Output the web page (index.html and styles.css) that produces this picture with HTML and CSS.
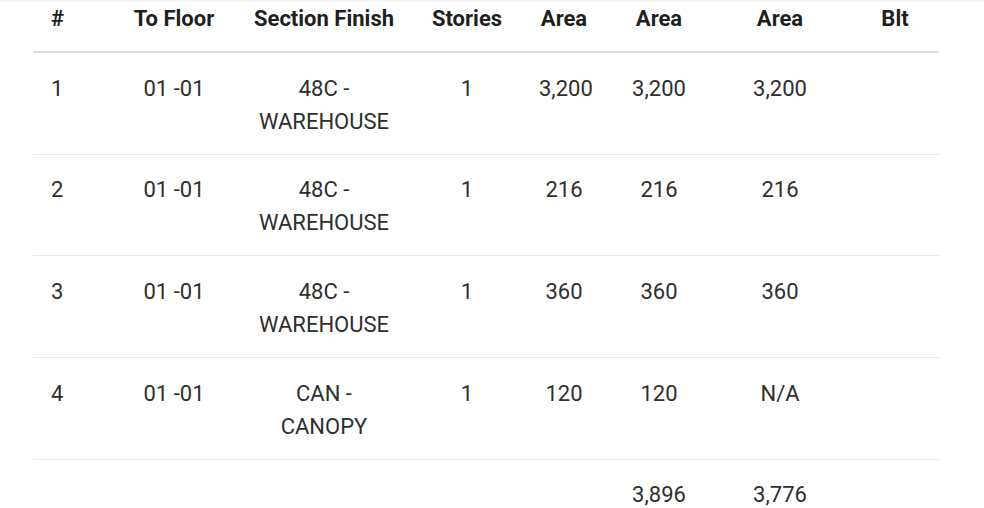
FILE: index.html
```html
<!DOCTYPE html>
<html lang="en">
<head>
<meta charset="utf-8">
<title>Sections</title>
<link rel="stylesheet" href="styles.css">
</head>
<body>
<div class="wrap">
<table class="sections">
  <colgroup>
    <col class="c1"><col class="c2"><col class="c3"><col class="c4"><col class="c5"><col class="c6"><col class="c7"><col class="c8">
  </colgroup>
  <thead>
    <tr><th class="first">#</th><th>To Floor</th><th>Section Finish</th><th>Stories</th><th>Area</th><th>Area</th><th>Area</th><th>Blt</th></tr>
  </thead>
  <tbody>
    <tr><td class="first">1</td><td>01 -01</td><td>48C - WAREHOUSE</td><td>1</td><td>3,200</td><td>3,200</td><td>3,200</td><td></td></tr>
    <tr><td class="first">2</td><td>01 -01</td><td>48C - WAREHOUSE</td><td>1</td><td>216</td><td>216</td><td>216</td><td></td></tr>
    <tr><td class="first">3</td><td>01 -01</td><td>48C - WAREHOUSE</td><td>1</td><td>360</td><td>360</td><td>360</td><td></td></tr>
    <tr><td class="first">4</td><td>01 -01</td><td>CAN - CANOPY</td><td>1</td><td>120</td><td>120</td><td>N/A</td><td></td></tr>
  </tbody>
  <tfoot>
    <tr><td class="first"></td><td></td><td></td><td></td><td></td><td>3,896</td><td>3,776</td><td></td></tr>
  </tfoot>
</table>
</div>
</body>
</html>
```
FILE: styles.css
```css
html, body {
  margin: 0;
  padding: 0;
  background: #fff;
}
body {
  font-family: Roboto, "Liberation Sans", sans-serif;
  color: #2e2e2e;
  overflow: hidden;
  border-top: 2px solid #f5f5f5;
}
.wrap {
  padding-left: 33px;
  margin-top: -17px;
}
.sections {
  border-collapse: collapse;
  table-layout: fixed;
  width: 906px;
  font-size: 22px;
  line-height: 33px;
}
.c1 { width: 82px; }
.c2 { width: 118px; }
.c3 { width: 182px; }
.c4 { width: 104px; }
.c5 { width: 90px; }
.c6 { width: 100px; }
.c7 { width: 142px; }
.c8 { width: 88px; }
.sections th {
  font-weight: 700;
  color: #1f1f1f;
  text-align: center;
  white-space: nowrap;
  padding: 17px 0 16px;
  border-bottom: 2px solid #dedede;
}
.sections td {
  text-align: center;
  vertical-align: top;
  padding: 18.5px 20px 16.2px;
  border-bottom: 1px solid #e8e8e8;
}
.sections tfoot td {
  border-bottom: none;
}
.sections .first {
  text-align: left;
  padding-left: 18px;
  padding-right: 0;
}
```
